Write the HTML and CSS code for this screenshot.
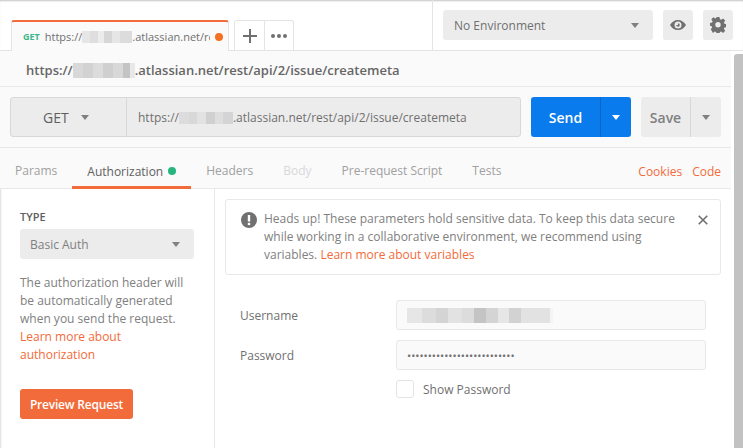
FILE: index.html
```html
<!DOCTYPE html>
<html lang="en">
<head>
  <meta charset="UTF-8">
  <title>Postman - Authorization</title>
  <link rel="stylesheet" href="styles.css">
</head>
<body>
  <div class="app">
    <!-- tab strip and environment -->
    <div class="topbar">
      <div class="tabs">
        <div class="tab">
          <span class="tab-method">GET</span>
          <span class="tab-name">https://<span class="blur blur-tab"></span>.atlassian.net/rest/api/2/issue/createmeta</span>
          <span class="tab-dot"></span>
        </div>
        <div class="tab-actions">
          <div class="tab-add">
            <svg width="14" height="14" viewBox="0 0 14 14"><path d="M7 0v14M0 7h14" stroke="#707070" stroke-width="2"/></svg>
          </div>
          <div class="tab-more"><i></i><i></i><i></i></div>
        </div>
      </div>
      <div class="env">
        <div class="env-select">No Environment <span class="caret"></span></div>
        <div class="icon-btn">
          <svg width="16" height="10" viewBox="0 0 16 10"><path fill-rule="evenodd" fill="#707070" d="M8 0c3.4 0 6.3 2 8 5-1.7 3-4.6 5-8 5S1.700 8 0 5c1.700-3 4.600-5 8-5zM8 1.500a3.500 3.500 0 1 0 0 7 3.500 3.500 0 0 0 0-7zM8 3.200a1.800 1.800 0 1 1-1.800 1.800H8z"/></svg>
        </div>
        <div class="icon-btn">
          <svg width="16" height="16" viewBox="0 0 16 16"><path fill-rule="evenodd" fill="#707070" d="M6.500 0h3l.4 2.200 1.300.6L13.100 1.500l2.100 2.100-1.300 1.900.5 1.300 2.100.4v3l-2.100.4-.5 1.300 1.300 1.900-2.100 2.100-1.900-1.300-1.300.5-.4 2.100h-3l-.4-2.100-1.300-.5-1.900 1.300L.8 12.300l1.300-1.900-.5-1.300L0 8.900v-3l2.100-.4.500-1.300L1.300 2.300 3.400.2l1.900 1.300 1-.4zM8 5a2.700 2.700 0 1 0 0 5.400A2.700 2.700 0 0 0 8 5z"/></svg>
        </div>
      </div>
    </div>

    <div class="main">
      <div class="content">
        <div class="title-row"><span>https://<span class="blur blur-title"></span>.atlassian.net/rest/api/2/issue/createmeta</span></div>

        <div class="url-row">
          <div class="url-box">
            <div class="method">GET <span class="caret"></span></div>
            <div class="url-text"><span>https://<span class="blur blur-url"></span>.atlassian.net/rest/api/2/issue/createmeta</span></div>
          </div>
          <div class="split send">
            <div class="split-label">Send</div>
            <div class="split-arrow"><span class="caret caret-white"></span></div>
          </div>
          <div class="split save">
            <div class="split-label">Save</div>
            <div class="split-arrow"><span class="caret"></span></div>
          </div>
        </div>

        <div class="req-tabs">
          <div class="req-tab">Params</div>
          <div class="req-tab active">Authorization<span class="green-dot"></span></div>
          <div class="req-tab">Headers</div>
          <div class="req-tab disabled">Body</div>
          <div class="req-tab">Pre-request Script</div>
          <div class="req-tab">Tests</div>
          <div class="req-links">
            <a class="link">Cookies</a>
            <a class="link">Code</a>
          </div>
        </div>

        <div class="auth">
          <div class="sidebar">
            <div class="type-label">TYPE</div>
            <div class="type-select">Basic Auth <span class="caret"></span></div>
            <p class="help">The authorization header will be automatically generated when you send the request. <a class="link">Learn more about authorization</a></p>
            <div class="preview-btn">Preview Request</div>
          </div>

          <div class="auth-main">
            <div class="alert">
              <svg class="alert-icon" width="16" height="16" viewBox="0 0 16 16"><circle cx="8" cy="8" r="8" fill="#707070"/><rect x="6.800" y="3" width="2.400" height="6.500" fill="#fff"/><rect x="6.800" y="10.800" width="2.400" height="2.300" fill="#fff"/></svg>
              <div class="alert-text">Heads up! These parameters hold sensitive data. To keep this data secure while working in a collaborative environment, we recommend using variables. <a class="link">Learn more about variables</a></div>
              <svg class="alert-close" width="10" height="10" viewBox="0 0 10 10"><path d="M.7.7l8.600 8.600M9.300.7L.7 9.300" stroke="#707070" stroke-width="1.600"/></svg>
            </div>

            <div class="form">
              <div class="form-row">
                <label class="form-label">Username</label>
                <div class="input"><span class="blur blur-user"></span></div>
              </div>
              <div class="form-row">
                <label class="form-label">Password</label>
                <div class="input input-pass">••••••••••••••••••••••••••</div>
              </div>
              <div class="form-row check-row">
                <span class="checkbox"></span>
                <span class="check-label">Show Password</span>
              </div>
            </div>
          </div>
        </div>
      </div>
      <div class="scrollbar"></div>
    </div>
  </div>
</body>
</html>
```

FILE: styles.css
```css
* {
  box-sizing: border-box;
}

html, body {
  margin: 0;
  height: 100%;
  overflow: hidden;
}

body {
  font-family: 'Open Sans', sans-serif;
  font-size: 12px;
  color: #808080;
  background-color: #ffffff;
}

.app {
  width: 743px;
  height: 448px;
  display: flex;
  flex-direction: column;
}

.link {
  color: #f26b3a;
}

.caret {
  display: inline-block;
  width: 0;
  height: 0;
  border-left: 4px solid transparent;
  border-right: 4px solid transparent;
  border-top: 5px solid #808080;
}

.caret-white {
  border-top-color: #ffffff;
}

/* pixelated parts of the redacted hostname */
.blur {
  display: inline-block;
  vertical-align: -2px;
}

.blur-tab {
  width: 50px;
  height: 12px;
  background-image: linear-gradient(90deg, #e6e6e6 0 16%, #dedede 16% 32%, #ececec 32% 44%, #d6d6d6 44% 60%, #e6e6e6 60% 76%, #dcdcdc 76% 100%);
}

.blur-title {
  width: 62px;
  height: 15px;
  vertical-align: -3px;
  background-image: linear-gradient(90deg, #d8d8d8 0 16%, #d2d2d2 16% 32%, #dcdcdc 32% 48%, #cfcfcf 48% 64%, #d8d8d8 64% 80%, #c4c4c4 80% 92%, #e8e8e8 92% 100%);
}

.blur-url {
  width: 54px;
  height: 12px;
  background-image: linear-gradient(90deg, #dcdcdc 0 18%, #d8d8d8 18% 34%, #e2e2e2 34% 50%, #d0d0d0 50% 66%, #dedede 66% 82%, #d4d4d4 82% 100%);
}

.blur-user {
  width: 146px;
  height: 15px;
  background-image: linear-gradient(90deg, #e6e6e6 0 10%, #dcdcdc 10% 20%, #d4d4d4 20% 28%, #e2e2e2 28% 38%, #dcdcdc 38% 46%, #c4c4c4 46% 54%, #d4d4d4 54% 62%, #e6e6e6 62% 70%, #d2d2d2 70% 78%, #e2e2e2 78% 98%, #f4f4f4 98% 100%);
}

/* top bar */
.topbar {
  height: 51px;
  flex-shrink: 0;
  display: flex;
  justify-content: space-between;
  border-bottom: 1px solid #e4e4e4;
  box-shadow: inset 0 2px 2px -1px #c4c4c4;
}

.tabs {
  display: flex;
  align-items: flex-end;
  padding-left: 11px;
  width: 433px;
  border-right: 1px solid #e4e4e4;
}

.tab {
  width: 218px;
  height: 31px;
  margin-bottom: -1px;
  padding: 0 5px 0 11px;
  display: flex;
  align-items: center;
  background-color: #fafafa;
  border-top: 2px solid #f26b3a;
  border-left: 1px solid #e4e4e4;
  border-right: 1px solid #e4e4e4;
  border-radius: 3px 3px 0 0;
}

.tab-method {
  font-size: 9px;
  font-weight: 700;
  color: #3cb78a;
  margin-right: 5px;
}

.tab-name {
  width: 166px;
  font-size: 11px;
  color: #707070;
  white-space: nowrap;
  overflow: hidden;
}

.tab-dot {
  width: 8px;
  height: 8px;
  margin-left: 5px;
  border-radius: 50%;
  background-color: #f47023;
}

.tab-actions {
  display: flex;
  height: 30px;
  margin-left: 5px;
  border: 1px solid #e4e4e4;
  border-bottom: none;
  border-radius: 3px 3px 0 0;
}

.tab-add {
  width: 30px;
  display: flex;
  align-items: center;
  justify-content: center;
  border-right: 1px solid #e4e4e4;
}

.tab-more {
  width: 28px;
  display: flex;
  align-items: center;
  justify-content: center;
  gap: 2px;
}

.tab-more i {
  width: 4px;
  height: 4px;
  border-radius: 50%;
  background-color: #707070;
}

.env {
  display: flex;
  gap: 10px;
  padding: 10px 10px 0 0;
}

.env-select {
  width: 210px;
  height: 30px;
  padding: 0 14px 0 11px;
  display: flex;
  align-items: center;
  justify-content: space-between;
  background-color: #ececec;
  border-radius: 3px;
  color: #707070;
}

.icon-btn {
  width: 30px;
  height: 30px;
  display: flex;
  align-items: center;
  justify-content: center;
  background-color: #ececec;
  border-radius: 3px;
}

/* main area */
.main {
  flex: 1;
  display: flex;
  min-height: 0;
}

.content {
  width: 731px;
  display: flex;
  flex-direction: column;
  box-shadow: inset 2px 0 2px -1px #dcdcdc;
}

.scrollbar {
  width: 9px;
  margin: 3px 0 0 3px;
  background-color: #c2c2c2;
  border-radius: 3px 0 0 0;
}

.title-row {
  height: 36px;
  padding: 2px 0 0 26px;
  display: flex;
  align-items: center;
  font-size: 13px;
  font-weight: 600;
  color: #666666;
  background-color: #fafafa;
  border-bottom: 1px solid #e8e8e8;
  white-space: nowrap;
}

.url-row {
  height: 61px;
  padding: 10px;
  display: flex;
  background-color: #fafafa;
  border-bottom: 1px solid #e8e8e8;
}

.url-box {
  width: 511px;
  height: 40px;
  display: flex;
  background-color: #ececec;
  border: 1px solid #d8d8d8;
  border-radius: 3px;
}

.method {
  width: 116px;
  padding-left: 32px;
  display: flex;
  align-items: center;
  gap: 12px;
  font-size: 14px;
  color: #606060;
  border-right: 1px solid #d8d8d8;
}

.url-text {
  flex: 1;
  padding-left: 11px;
  display: flex;
  align-items: center;
  color: #707070;
  font-size: 12px;
  white-space: nowrap;
}

.split {
  height: 40px;
  display: flex;
  border-radius: 3px;
  font-size: 14px;
  font-weight: 600;
}

.send {
  width: 100px;
  margin-left: 10px;
  background-color: #097bed;
  color: #ffffff;
}

.save {
  width: 80px;
  margin-left: 10px;
  background-color: #ececec;
  color: #808080;
}

.split-label {
  flex: 1;
  display: flex;
  align-items: center;
  justify-content: center;
}

.split-arrow {
  width: 31px;
  display: flex;
  align-items: center;
  justify-content: center;
  border-left: 1px solid #0768c8;
}

.save .split-arrow {
  border-left-color: #d8d8d8;
}

.req-tabs {
  height: 41px;
  display: flex;
  align-items: stretch;
  background-color: #fafafa;
  border-bottom: 1px solid #e8e8e8;
}

.req-tab {
  padding: 5px 15px 0;
  display: flex;
  align-items: center;
  gap: 5px;
  color: #a0a0a0;
  white-space: nowrap;
}

.req-tab.active {
  color: #606060;
  border-bottom: 3px solid #f26b3a;
  margin-bottom: -1px;
  padding-top: 8px;
}

.req-tab.disabled {
  color: #d8d8d8;
}

.green-dot {
  width: 8px;
  height: 8px;
  border-radius: 50%;
  background-color: #26b47f;
}

.req-links {
  margin-left: auto;
  padding: 7px 10px 0 0;
  display: flex;
  align-items: center;
  gap: 10px;
}

/* auth panel */
.auth {
  flex: 1;
  display: flex;
  min-height: 0;
}

.sidebar {
  width: 215px;
  padding: 20px 20px 0;
  border-right: 1px solid #e8e8e8;
}

.type-label {
  height: 20px;
  line-height: 16px;
  font-size: 11px;
  font-weight: 600;
  color: #606060;
}

.type-select {
  width: 174px;
  height: 30px;
  padding: 0 14px 0 10px;
  display: flex;
  align-items: center;
  justify-content: space-between;
  background-color: #ececec;
  border-radius: 3px;
}

.help {
  margin: 15px 0 25px;
  line-height: 18px;
}

.preview-btn {
  width: 113px;
  height: 30px;
  display: flex;
  align-items: center;
  justify-content: center;
  background-color: #f26b3a;
  border-radius: 3px;
  color: #ffffff;
  font-weight: 600;
  letter-spacing: -0.2px;
}

.auth-main {
  flex: 1;
  padding: 10px 10px 0;
}

.alert {
  height: 76px;
  padding: 10px 11px 0 15px;
  display: flex;
  border: 1px solid #e8e8e8;
  border-radius: 3px;
}

.alert-icon {
  flex-shrink: 0;
  margin: 2px 7px 0 0;
}

.alert-text {
  width: 424px;
  line-height: 18px;
}

.alert-close {
  margin: 5px 0 0 10px;
}

.form {
  padding-top: 25px;
}

.form-row {
  height: 30px;
  margin-bottom: 10px;
  padding-left: 15px;
  display: flex;
  align-items: center;
}

.form-label {
  width: 156px;
  color: #707070;
}

.input {
  width: 310px;
  height: 30px;
  padding: 0 10px;
  display: flex;
  align-items: center;
  background-color: #fafafa;
  border: 1px solid #e8e8e8;
  border-radius: 3px;
}

.input-pass {
  font-size: 11px;
  color: #707070;
}

.check-row {
  height: 18px;
  padding-left: 171px;
}

.checkbox {
  width: 18px;
  height: 18px;
  background-color: #ffffff;
  border: 1px solid #e4e4e4;
  border-radius: 3px;
}

.check-label {
  margin-left: 9px;
  color: #707070;
}
```
